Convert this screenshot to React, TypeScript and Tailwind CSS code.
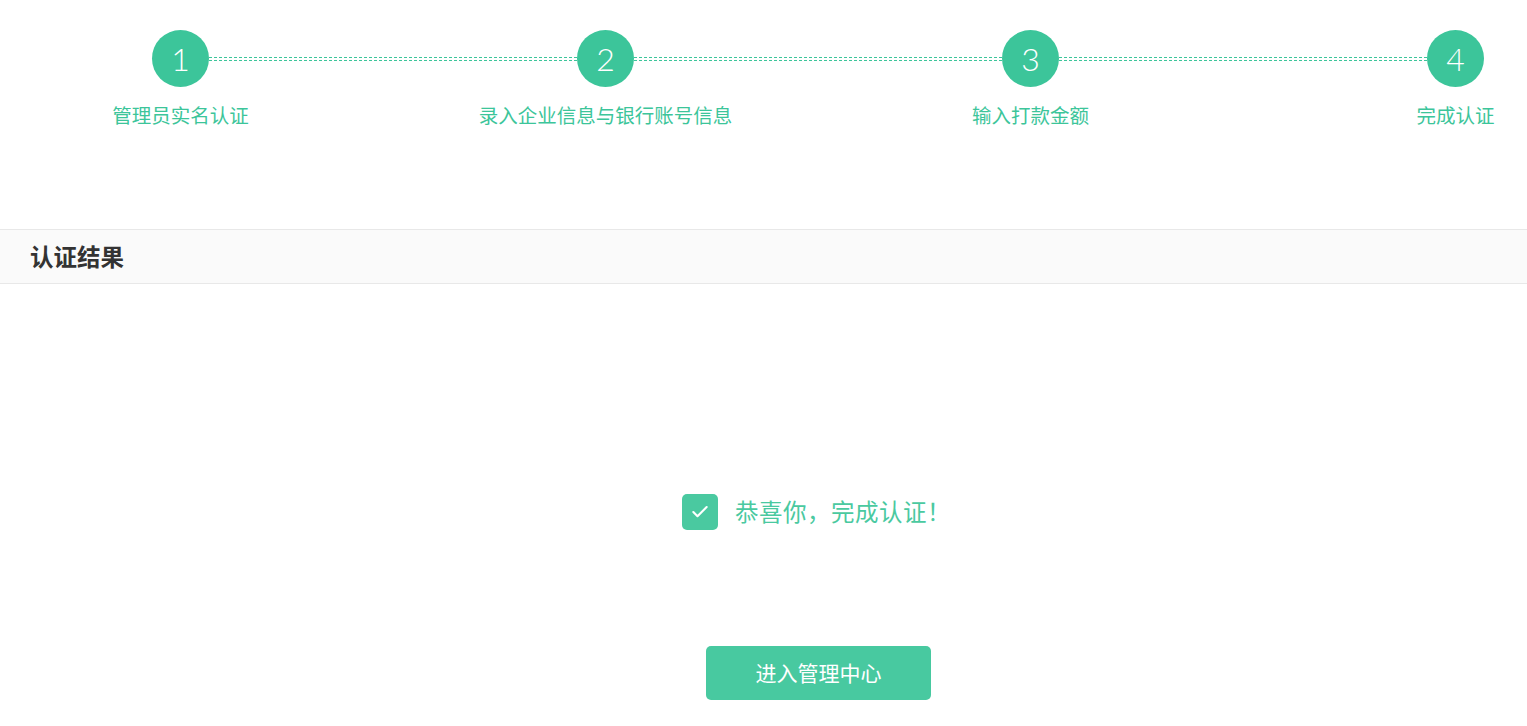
import { Check } from 'lucide-react';

const steps = ['管理员实名认证', '录入企业信息与银行账号信息', '输入打款金额', '完成认证'];

function StepLabel({ text }: { text: string }) {
  return (
    <div className="w-[57px] flex justify-center">
      <span className="whitespace-nowrap text-[19.5px] leading-6 text-[#3cc59a]">{text}</span>
    </div>
  );
}

export default function App() {
  return (
    <div
      className="w-[1527px] h-[726px] bg-white overflow-hidden"
      style={{ fontFamily: '"Noto Sans CJK SC", "Noto Sans", sans-serif' }}
    >
      {/* Steps */}
      <div className="pt-[30px] pl-[152px] pr-[43px]">
        <div className="flex items-center">
          {steps.map((s, i) => (
            <div key={s} className={i < steps.length - 1 ? 'flex items-center flex-1' : 'flex items-center'}>
              <div
                className="w-[57px] h-[57px] rounded-full bg-[#3cc59a] flex items-center justify-center text-white text-[32px] font-light"
                style={{ fontFamily: 'Lato, "Open Sans", sans-serif' }}
              >
                {i + 1}
              </div>
              {i < steps.length - 1 && (
                <div className="flex-1 h-[4px] border-y border-dashed border-[#3cc59a]" />
              )}
            </div>
          ))}
        </div>
        <div className="flex justify-between mt-[16px]">
          {steps.map((s) => (
            <StepLabel key={s} text={s} />
          ))}
        </div>
      </div>

      {/* Section header */}
      <div className="mt-[102px] h-[55px] bg-[#fafafa] border-y border-[#e8e8e8] flex items-center px-[30px]">
        <h2 className="text-[23.5px] font-bold text-[#333]">认证结果</h2>
      </div>

      {/* Result */}
      <div className="flex flex-col items-center pl-[110px]">
        <div className="mt-[210px] flex items-center gap-[17px] ml-[-4px]">
          <div className="w-[36px] h-[36px] rounded-[5px] bg-[#4ac9a0] flex items-center justify-center">
            <Check className="w-[20px] h-[20px] text-white" strokeWidth={2.5} />
          </div>
          <span className="text-[23.5px] text-[#4ac9a0] tracking-[0.5px]">恭喜你，完成认证！</span>
        </div>
        <button className="mt-[116px] w-[225px] h-[54px] rounded-[5px] bg-[#48c9a0] text-white text-[21px]">
          进入管理中心
        </button>
      </div>
    </div>
  );
}
